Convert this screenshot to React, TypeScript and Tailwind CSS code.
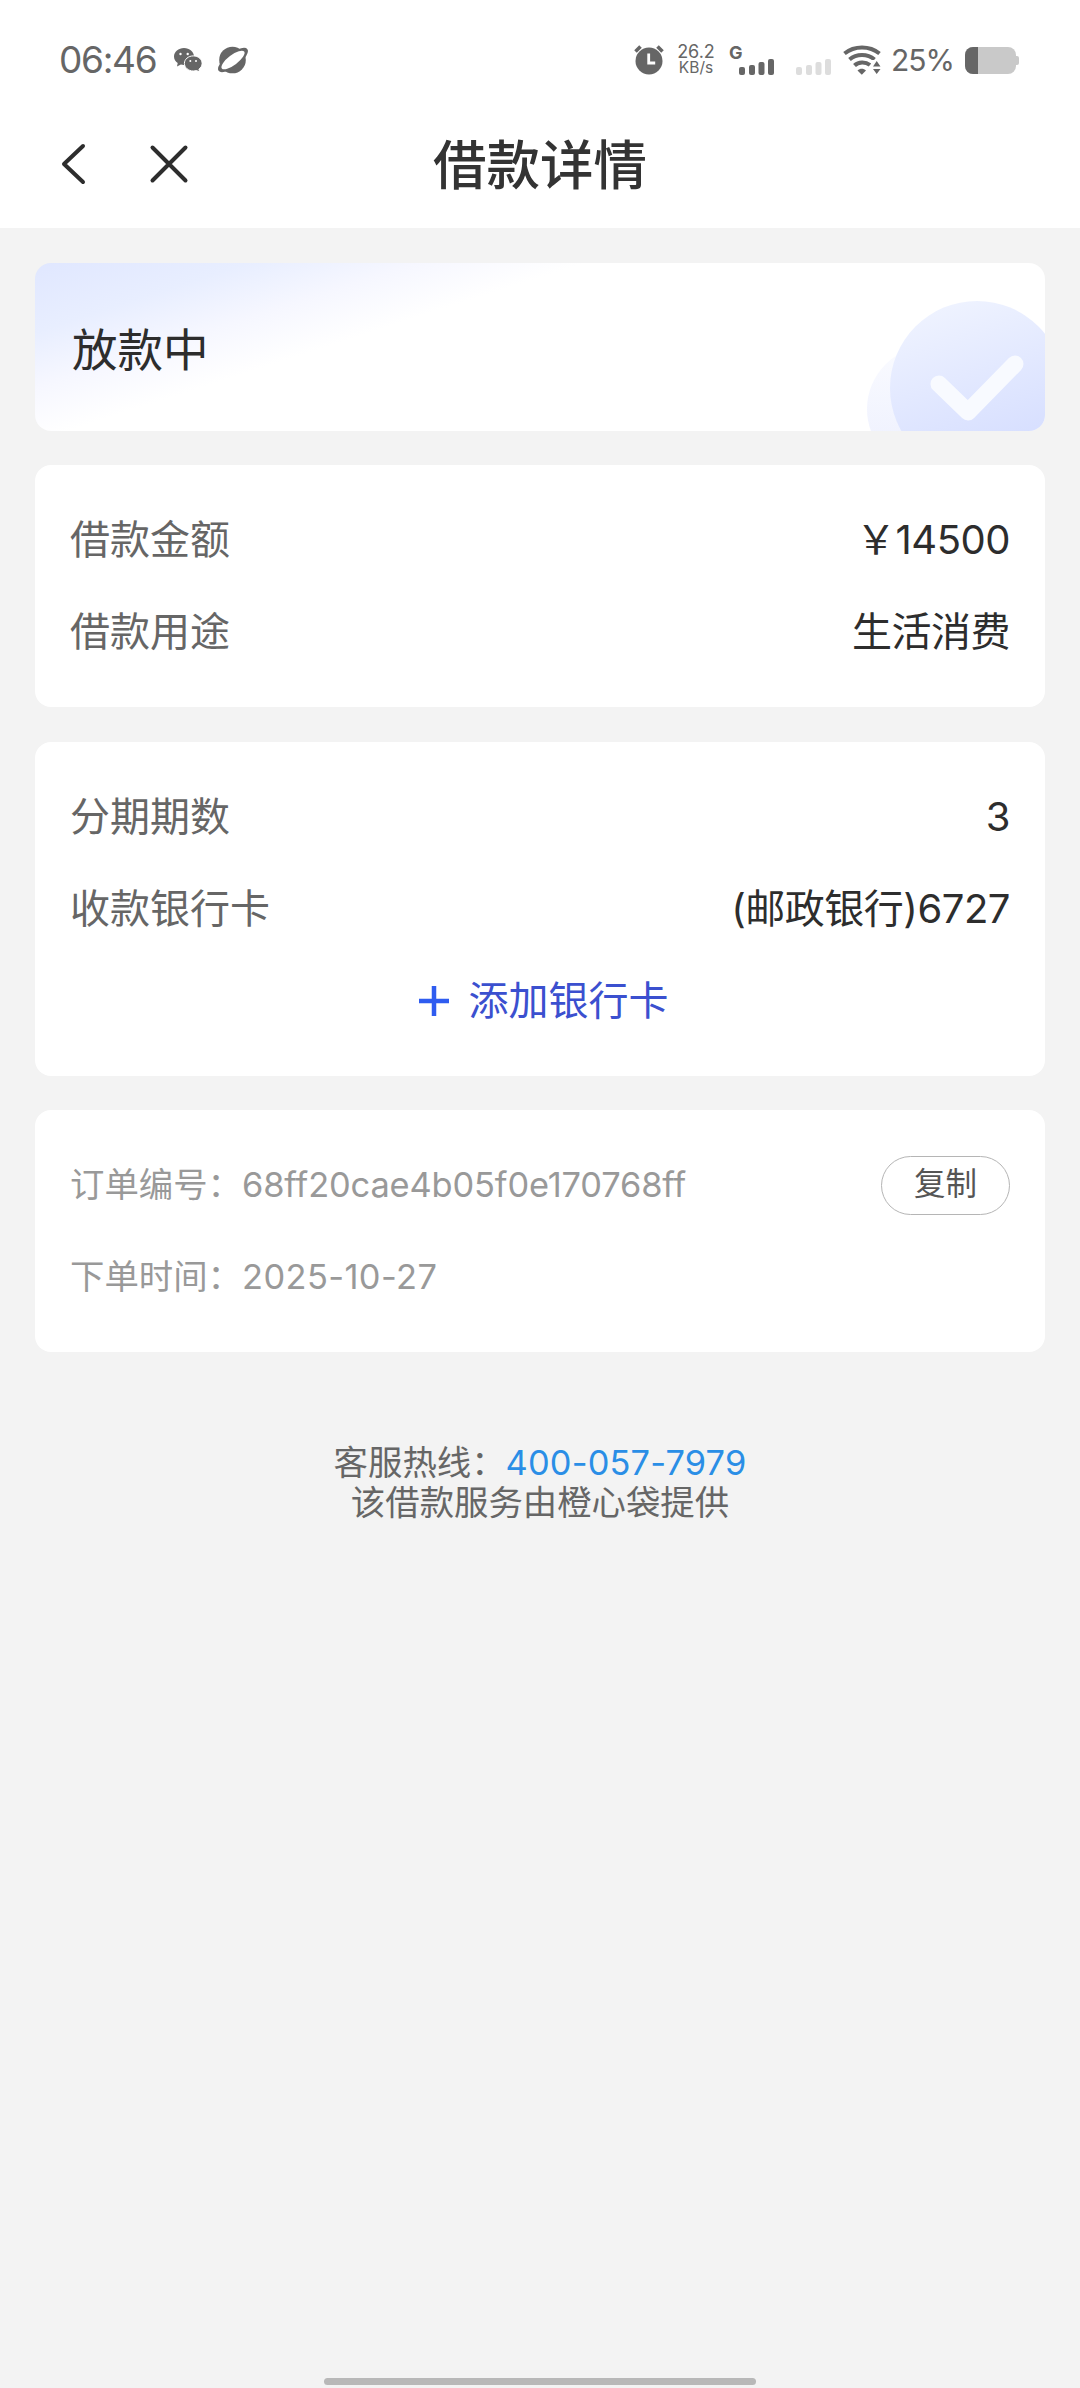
import type { ReactNode } from "react";
import { clsx } from "clsx";

const SIGNAL_BARS = [
  { x: 0, h: 8 },
  { x: 10, h: 10 },
  { x: 19.5, h: 13 },
  { x: 29, h: 16 },
];

function SignalBars({ className }: { className?: string }) {
  return (
    <svg viewBox="0 0 36 16" fill="currentColor" className={clsx("h-4 w-9 shrink-0", className)}>
      {SIGNAL_BARS.map((bar) => (
        <rect key={bar.x} x={bar.x} y={16 - bar.h} width={6} height={bar.h} rx={2} />
      ))}
    </svg>
  );
}

function WeChatIcon() {
  return (
    <svg viewBox="0 0 28 24" className="h-6 w-7 shrink-0">
      <path
        d="M10 0C4.500 0 0 3.800 0 8.500c0 2.700 1.400 4.900 3.700 6.500L3 18.400l3.900-2c1 .3 2 .5 3.100.5 5.500 0 10-3.700 10-8.400S15.500 0 10 0z"
        fill="#666"
      />
      <path
        d="M19.300 7.900c-4.900 0-8.900 3.300-8.900 7.500s4 7.600 8.900 7.600c1.100 0 2.200-.2 3.200-.5l3.100 1.500-.7-2.800c2-1.400 3.200-3.400 3.200-5.800 0-4.200-3.900-7.500-8.800-7.500z"
        fill="#666"
        stroke="#fff"
        strokeWidth="1"
      />
      <g fill="#fff">
        <circle cx="6.500" cy="6" r="1.200" />
        <circle cx="13.700" cy="6" r="1.200" />
        <circle cx="16.300" cy="13" r="1" />
        <circle cx="22" cy="13" r="1" />
      </g>
    </svg>
  );
}

function PlanetIcon() {
  return (
    <svg viewBox="0 0 32 28" className="h-7 w-8 shrink-0">
      <circle cx="15.500" cy="14" r="13.300" fill="#666" />
      <g transform="rotate(-37 16 14)">
        <ellipse cx="16" cy="14" rx="18" ry="6.800" fill="#666" />
        <ellipse cx="16" cy="14" rx="14" ry="5" fill="#fff" />
      </g>
    </svg>
  );
}

function AlarmIcon() {
  return (
    <svg viewBox="0 0 30 30" fill="none" className="h-[30px] w-[30px] shrink-0">
      <circle cx="15" cy="16" r="13.500" fill="#666" />
      <path d="M1.500 6.500l5-5M28.500 6.500l-5-5" stroke="#666" strokeWidth="3.600" />
      <path d="M14.700 8.500v9.500h6.500" stroke="#fff" strokeWidth="2.800" />
    </svg>
  );
}

function WifiIcon() {
  return (
    <svg viewBox="0 0 38 30" fill="none" className="h-[30px] w-[38px] shrink-0">
      <g stroke="#666" strokeWidth="4">
        <path d="M1.500 8.500c10-8 25-8 35 0" />
        <path d="M6.500 14.500c7-6 18-6 25 0" />
        <path d="M11.500 20.500c4-4 11-4 15.500-.5" />
      </g>
      <path d="M14.500 25.500c2.500-2.300 6-2.300 8.500 0l-4.200 4.300z" fill="#666" />
      <path d="M28 15h11v15H28z" fill="#fff" />
      <path d="M30 21.500l3.700-5.500 3.800 5.500zM30 24h7.500l-3.800 5z" fill="#666" />
    </svg>
  );
}

function StatusBar() {
  return (
    <div className="flex h-[120px] items-center pl-[59px] text-[#666]">
      <div className="flex w-[575px] items-center">
        <span className="w-[115px] text-[37px] tracking-[-0.035em]">06:46</span>
        <WeChatIcon />
        <div className="ml-[15px]">
          <PlanetIcon />
        </div>
      </div>
      <AlarmIcon />
      <div className="ml-[10px] flex w-[44px] flex-col items-center leading-[16px]">
        <span className="text-[18px]">26.2</span>
        <span className="text-[15.500px]">KB/s</span>
      </div>
      <div className="ml-[11px] flex h-[30px] w-[46px] flex-col">
        <span className="h-[14px] text-[18px] leading-[15px] font-bold">G</span>
        <SignalBars className="ml-[10px]" />
      </div>
      <SignalBars className="mt-[14px] ml-[21px] text-[#ddd]" />
      <div className="ml-[11px]">
        <WifiIcon />
      </div>
      <span className="ml-[10px] w-[74px] text-[30px] tracking-[-0.035em]">25%</span>
      <div className="flex items-center">
        <div className="flex h-[27px] w-[51px] overflow-hidden rounded-[8px] bg-[#c9c9c9]">
          <div className="w-[13px] bg-[#666]" />
        </div>
        <div className="h-[9px] w-[3px] rounded-r-[2px] bg-[#c9c9c9]" />
      </div>
    </div>
  );
}

function NavBar() {
  return (
    <div className="grid h-[108px] grid-cols-[1fr_auto_1fr] pb-[20px]">
      <div className="flex items-center pl-[60px]">
        <svg viewBox="0 0 26 42" fill="none" className="h-[42px] w-[26px]">
          <path d="M23 3L4 21l19 18" stroke="#2d2d2d" strokeWidth="4" strokeLinecap="round" strokeLinejoin="round" />
        </svg>
        <svg viewBox="0 0 40 40" fill="none" className="ml-[63px] h-[40px] w-[40px]">
          <path d="M3.500 3.500l33 33M36.500 3.500l-33 33" stroke="#2d2d2d" strokeWidth="4" strokeLinecap="round" />
        </svg>
      </div>
      <h1 className="flex items-center pt-[4px] text-[53.500px] font-medium text-[#333]">借款详情</h1>
    </div>
  );
}

function Card({ children }: { children: ReactNode }) {
  return <section className="rounded-[16px] bg-white px-[35px] py-[29px]">{children}</section>;
}

function InfoRow({ label, value }: { label: string; value: string }) {
  return (
    <div className="flex h-[92px] items-center justify-between text-[40px]">
      <span className="text-[#666]">{label}</span>
      <span className="tracking-[-0.012em] text-[#2d2d2d]">{value}</span>
    </div>
  );
}

interface OrderRowProps {
  label: string;
  value: string;
  valueClassName?: string;
  children?: ReactNode;
}

function OrderRow({ label, value, valueClassName, children }: OrderRowProps) {
  return (
    <div className="flex h-[92px] items-center text-[34.400px] text-[#999]">
      <span className="w-[172px] whitespace-nowrap">{label}：</span>
      <span className={valueClassName}>{value}</span>
      {children}
    </div>
  );
}

function StatusCard() {
  return (
    <section className="flex h-[168px] items-center justify-between overflow-hidden rounded-[16px] bg-white bg-[linear-gradient(162deg,#e0e7ff_0%,#e8eeff_14%,#f6f7ff_25%,#fff_36%)] pl-[37px]">
      <span className="pt-[9px] text-[45.500px] text-[#2d2d2d]">放款中</span>
      <svg viewBox="0 0 180 168" fill="none" className="h-[168px] w-[180px]">
        <defs>
          <linearGradient id="disc" x1="0.3" y1="0" x2="0.6" y2="0.85">
            <stop stopColor="#eff3ff" />
            <stop offset="1" stopColor="#d7dfff" />
          </linearGradient>
          <linearGradient id="disc-back" x1="0" y1="0" x2="0" y2="1">
            <stop stopColor="#fafbff" />
            <stop offset="1" stopColor="#eceffe" />
          </linearGradient>
        </defs>
        <circle cx="65" cy="146" r="63" fill="url(#disc-back)" />
        <circle cx="112" cy="125" r="87" fill="url(#disc)" />
        <path
          d="M74 121l29 28 47-48"
          stroke="#f8faff"
          strokeWidth="17"
          strokeLinecap="round"
          strokeLinejoin="round"
        />
      </svg>
    </section>
  );
}

export default function App() {
  return (
    <div className="flex h-[2388px] w-[1080px] flex-col bg-[#f3f3f3] font-[Inter,'Noto_Sans_CJK_SC',sans-serif] leading-[1.2]">
      <header className="bg-white">
        <StatusBar />
        <NavBar />
      </header>

      <main className="flex flex-1 flex-col gap-[34.500px] px-[35px] pt-[34.500px]">
        <StatusCard />

        <Card>
          <InfoRow label="借款金额" value="￥14500" />
          <InfoRow label="借款用途" value="生活消费" />
        </Card>

        <Card>
          <InfoRow label="分期期数" value="3" />
          <InfoRow label="收款银行卡" value="(邮政银行)6727" />
          <button className="flex h-[92px] w-full items-center justify-center gap-[19px] pl-[6px] text-[40px] text-[#3b50cf]">
            <svg viewBox="0 0 32 32" className="h-8 w-8">
              <path d="M16 1v30M1 16h30" stroke="#2f5cf0" strokeWidth="4.500" />
            </svg>
            添加银行卡
          </button>
        </Card>

        <Card>
          <OrderRow label="订单编号" value="68ff20cae4b05f0e170768ff" valueClassName="tracking-[-0.004em]">
            <button className="ml-auto h-[59px] w-[129px] rounded-full border border-[#b5b5b5] pb-[2px] text-[31.500px] text-[#555]">
              复制
            </button>
          </OrderRow>
          <OrderRow label="下单时间" value="2025-10-27" valueClassName="tracking-[0.012em]" />
        </Card>

        <footer className="mt-[56px] flex flex-col items-center text-[34.400px] leading-[40px] text-[#666]">
          <p>
            客服热线：<span className="tracking-[0.005em] text-[#2a8ee6]">400-057-7979</span>
          </p>
          <p>该借款服务由橙心袋提供</p>
        </footer>
      </main>

      <div className="mx-auto mb-[3px] h-[7px] w-[432px] rounded-full bg-[#b8b8b8]" />
    </div>
  );
}
